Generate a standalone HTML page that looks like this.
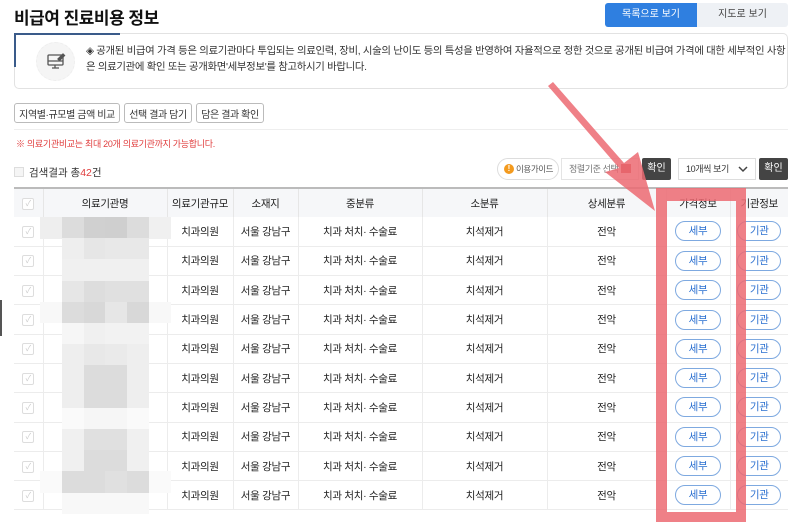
<!DOCTYPE html>
<html><head><meta charset="utf-8">
<style>
*{margin:0;padding:0;box-sizing:border-box}
body{width:800px;height:531px;overflow:hidden;background:#fff;font-family:"Liberation Sans","Noto Sans CJK KR",sans-serif;color:#222;position:relative;white-space:nowrap}
.a{position:absolute}
.btn{position:absolute;border:1px solid #bbb;border-radius:3px;font-size:10px;letter-spacing:-0.4px;color:#333;display:flex;align-items:center;justify-content:center;background:#fff}
table{position:absolute;left:14px;top:187px;width:774px;border-collapse:collapse;font-size:10.5px;color:#222;letter-spacing:-0.3px}
th{height:29px;font-weight:normal;background:#f6f7f9;border-top:2px solid #bbb;border-left:1px solid #e6e6e6}
td{height:29.3px;text-align:center;border-bottom:1px solid #ececec;border-left:1px solid #ececec}
th:first-child,td:first-child{border-left:none}
.cb{display:inline-block;width:12px;height:12px;border:1px solid #ddd;border-radius:2px;color:#ccc;font-size:8px;line-height:10px}
.pill{display:inline-block;width:46px;height:20px;border:1px solid #7ea9e0;border-radius:10px;color:#2a6fd0;line-height:18px;font-size:10.5px}
.mz{position:absolute;width:22px;height:21.5px}
</style></head><body>
<div class="a" style="left:14px;top:4px;font-size:17px;font-weight:bold;color:#111;letter-spacing:-0.5px">비급여 진료비용 정보</div>
<div class="a" style="left:605px;top:3px;width:92px;height:24px;background:#2f7fe0;border-radius:3px 0 0 3px;color:#fff;font-size:10px;text-align:center;line-height:24px">목록으로 보기</div>
<div class="a" style="left:697px;top:3px;width:91px;height:24px;background:#eef1f5;border-radius:0 3px 3px 0;color:#444;font-size:10px;text-align:center;line-height:24px">지도로 보기</div>
<div class="a" style="left:14px;top:33px;width:774px;height:56px;border:1px solid #e2e2e2;border-radius:5px"></div>
<div class="a" style="left:14px;top:33px;width:106px;height:2px;background:#3a5b8a;border-radius:5px 0 0 0"></div>
<div class="a" style="left:14px;top:33px;width:2px;height:34px;background:#3a5b8a"></div>
<div class="a" style="left:36px;top:42px;width:39px;height:39px;border-radius:50%;background:#f5f5f5;border:1px dashed #eee"></div>
<svg class="a" style="left:45px;top:50px" width="22" height="22" viewBox="0 0 22 22" fill="none" stroke="#555" stroke-width="1.3"><rect x="3" y="5" width="15" height="10" rx="1"/><path d="M3 11h15M10 15v3M7 18h7"/><path d="M13 9l5-5 1.5 1.5-5 5z" fill="#555"/></svg>
<div class="a" style="left:86px;top:44px;font-size:10.4px;color:#333;line-height:16px;letter-spacing:-0.3px">◈ 공개된 비급여 가격 등은 의료기관마다 투입되는 의료인력, 장비, 시술의 난이도 등의 특성을 반영하여 자율적으로 정한 것으로 공개된 비급여 가격에 대한 세부적인 사항<br>은 의료기관에 확인 또는 공개화면'세부정보'를 참고하시기 바랍니다.</div>
<div class="btn" style="left:14px;top:103px;width:106px;height:20px">지역별·규모별 금액 비교</div>
<div class="btn" style="left:124px;top:103px;width:68px;height:20px">선택 결과 담기</div>
<div class="btn" style="left:196px;top:103px;width:68px;height:20px">담은 결과 확인</div>
<div class="a" style="left:14px;top:129px;width:774px;height:1px;background:#eee"></div>
<div class="a" style="left:16px;top:137px;font-size:9px;color:#e03c3c;letter-spacing:-0.3px">※ 의료기관비교는 최대 20개 의료기관까지 가능합니다.</div>
<div class="a" style="left:14px;top:167px;width:10px;height:10px;border:1px solid #ddd;background:#f5f5f5"></div>
<div class="a" style="left:29px;top:165px;font-size:10.5px;color:#333">검색결과 총<span style="color:#e03c3c">42</span>건</div>
<div class="a" style="left:497px;top:158px;width:62px;height:22px;border:1px solid #ddd;border-radius:11px;font-size:8.5px;color:#555;line-height:20px;padding-left:18px;letter-spacing:-0.4px">이용가이드</div>
<div class="a" style="left:504px;top:164px;width:10px;height:10px;border-radius:50%;background:#f39a1e;color:#fff;font-size:8px;text-align:center;line-height:10px;font-weight:bold">!</div>
<div class="a" style="left:561px;top:158px;width:78px;height:22px;border:1px solid #e4e4e4;font-size:9px;color:#777;line-height:20px;padding-left:7px;letter-spacing:-0.4px">정렬기준 선택</div>
<div class="a" style="left:621px;top:164px;width:10px;height:9px;background:#c84a4a"></div>
<div class="a" style="left:642px;top:158px;width:29px;height:22px;background:#444;border-radius:2px;color:#fff;font-size:10px;text-align:center;line-height:22px">확인</div>
<div class="a" style="left:678px;top:158px;width:78px;height:22px;border:1px solid #ddd;font-size:9px;color:#333;line-height:20px;padding-left:7px;letter-spacing:-0.4px">10개씩 보기</div>
<svg class="a" style="left:738px;top:165px" width="10" height="8"><path d="M1 2l4 4 4-4" fill="none" stroke="#444" stroke-width="1.5"/></svg>
<div class="a" style="left:759px;top:158px;width:29px;height:22px;background:#444;border-radius:2px;color:#fff;font-size:10px;text-align:center;line-height:22px">확인</div>
<table>
<tr><th style="width:29px"><span class="cb" style="background:#fff">✓</span></th><th style="width:124px">의료기관명</th><th style="width:66px">의료기관규모</th><th style="width:65px">소재지</th><th style="width:124px">중분류</th><th style="width:125px">소분류</th><th style="width:119px">상세분류</th><th style="width:64px">가격정보</th><th>기관정보</th></tr>
<tr><td><span class="cb">✓</span></td><td></td><td>치과의원</td><td>서울 강남구</td><td>치과 처치· 수술료</td><td>치석제거</td><td>전악</td><td><span class="pill">세부</span></td><td><span class="pill" style="width:44px">기관</span></td></tr>
<tr><td><span class="cb">✓</span></td><td></td><td>치과의원</td><td>서울 강남구</td><td>치과 처치· 수술료</td><td>치석제거</td><td>전악</td><td><span class="pill">세부</span></td><td><span class="pill" style="width:44px">기관</span></td></tr>
<tr><td><span class="cb">✓</span></td><td></td><td>치과의원</td><td>서울 강남구</td><td>치과 처치· 수술료</td><td>치석제거</td><td>전악</td><td><span class="pill">세부</span></td><td><span class="pill" style="width:44px">기관</span></td></tr>
<tr><td><span class="cb">✓</span></td><td></td><td>치과의원</td><td>서울 강남구</td><td>치과 처치· 수술료</td><td>치석제거</td><td>전악</td><td><span class="pill">세부</span></td><td><span class="pill" style="width:44px">기관</span></td></tr>
<tr><td><span class="cb">✓</span></td><td></td><td>치과의원</td><td>서울 강남구</td><td>치과 처치· 수술료</td><td>치석제거</td><td>전악</td><td><span class="pill">세부</span></td><td><span class="pill" style="width:44px">기관</span></td></tr>
<tr><td><span class="cb">✓</span></td><td></td><td>치과의원</td><td>서울 강남구</td><td>치과 처치· 수술료</td><td>치석제거</td><td>전악</td><td><span class="pill">세부</span></td><td><span class="pill" style="width:44px">기관</span></td></tr>
<tr><td><span class="cb">✓</span></td><td></td><td>치과의원</td><td>서울 강남구</td><td>치과 처치· 수술료</td><td>치석제거</td><td>전악</td><td><span class="pill">세부</span></td><td><span class="pill" style="width:44px">기관</span></td></tr>
<tr><td><span class="cb">✓</span></td><td></td><td>치과의원</td><td>서울 강남구</td><td>치과 처치· 수술료</td><td>치석제거</td><td>전악</td><td><span class="pill">세부</span></td><td><span class="pill" style="width:44px">기관</span></td></tr>
<tr><td><span class="cb">✓</span></td><td></td><td>치과의원</td><td>서울 강남구</td><td>치과 처치· 수술료</td><td>치석제거</td><td>전악</td><td><span class="pill">세부</span></td><td><span class="pill" style="width:44px">기관</span></td></tr>
<tr><td><span class="cb">✓</span></td><td></td><td>치과의원</td><td>서울 강남구</td><td>치과 처치· 수술료</td><td>치석제거</td><td>전악</td><td><span class="pill">세부</span></td><td><span class="pill" style="width:44px">기관</span></td></tr>
</table>
<div id="mz"></div>
<script>
var v=[["ee","dc","d0","cf","dc","f0"],["ff","ee","e6","e8","e8","ff"],["ff","f0","f0","f0","f0","ff"],["ff","e6","dd","e0","e0","ff"],["f8","dc","d8","e6","d8","f8"],["ff","f6","f0","f2","f2","ff"],["ff","ee","e8","ea","ee","ff"],["ff","ee","dc","dc","ee","ff"],["ff","ee","dc","dc","ee","ff"],["ff","fa","f6","f6","fa","ff"],["ff","f0","e0","e0","f0","ff"],["ff","f0","dc","dc","f0","ff"],["fa","dc","dc","e0","dc","fa"],["ff","f8","f8","f8","f8","ff"]];
var xs=[40,62,84,105,127,149],h="";
for(var r=0;r<v.length;r++)for(var c=0;c<6;c++){if(v[r][c]=="ff")continue;h+='<div class="mz" style="left:'+xs[c]+'px;top:'+(217+r*21.2)+'px;background:#'+v[r][c]+v[r][c]+v[r][c]+'"></div>';}
document.getElementById("mz").innerHTML=h;
</script>
<div class="a" style="left:0;top:300px;width:2px;height:36px;background:#555"></div>
<svg class="a" style="left:0;top:0" width="800" height="531">
<g fill="#ec6a72" fill-opacity="0.85">
<path d="M656 188H746V522H656Z M667 201V512H736V201Z" fill-rule="evenodd"/>
<path d="M548 86L553 82L624 163L638 152L655 211L605 172L619 168Z"/>
</g>
</svg>
</body></html>
